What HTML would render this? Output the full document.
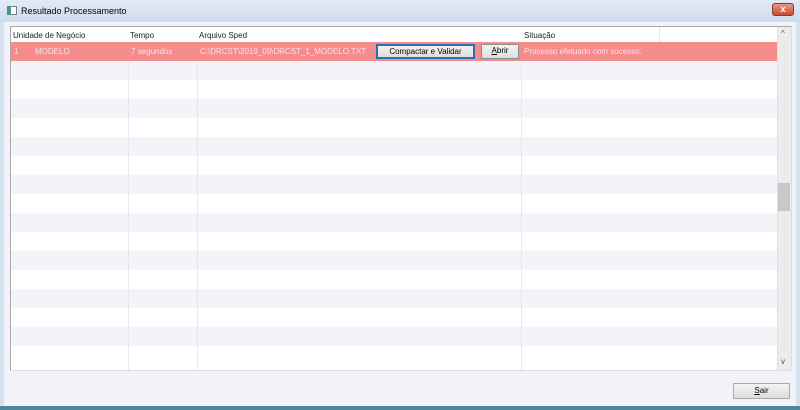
<!DOCTYPE html>
<html><head><style>
*{margin:0;padding:0;box-sizing:border-box}
body{width:800px;height:410px;overflow:hidden;background:#d3e1f1;font-family:"Liberation Sans",sans-serif;font-size:8px;color:#222;position:relative}
.a{position:absolute}
.title{left:0;top:0;width:800px;height:22px;background:linear-gradient(#e2ebf6,#cddcee)}
.client{left:4px;top:22px;width:792px;height:384px;background:#f2f2f8}
.grid{left:10px;top:26px;width:782px;height:345px;border:1px solid #a8a8a8;border-right-color:#ddd;border-bottom-color:#ddd;background:#fff;overflow:hidden}
.row{position:absolute;left:0;width:766px;height:19px}
.vl{position:absolute;top:15px;bottom:0;width:1px;background:#e6e6ec}
.t{position:absolute;white-space:nowrap}
.btn{position:absolute;border:1px solid #8e8e8e;background:linear-gradient(#f3f3f3,#dedede);text-align:center;font-size:8px;line-height:12px;color:#000}
.s{background:#f3f3fa}
</style></head><body>
<div class="a title"></div>
<div class="a" style="left:7px;top:6px;width:10px;height:9px;border:1px solid #6a7f99;background:#fff"><div style="width:3px;height:7px;background:#3a6;"></div></div>
<div class="a t" style="left:21px;top:6px;font-size:9px;color:#000">Resultado Processamento</div>
<div class="a" style="left:772px;top:3px;width:22px;height:13px;border:1px solid #8a3a30;border-radius:3px;background:linear-gradient(#e89a88,#c84a36);color:#fff;font-size:9px;text-align:center;line-height:11px;font-weight:bold">x</div>
<div class="a client"></div>
<div class="a" style="left:0;top:406px;width:800px;height:4px;background:#4a8a9a"></div>
<div class="a grid">
  <div class="t" style="left:2px;top:4px">Unidade de Negócio</div>
  <div class="t" style="left:119px;top:4px">Tempo</div>
  <div class="t" style="left:188px;top:4px">Arquivo Sped</div>
  <div class="t" style="left:513px;top:4px">Situação</div>
  <div class="row s" style="top:34px"></div>
  <div class="row s" style="top:72px"></div>
  <div class="row s" style="top:110px"></div>
  <div class="row s" style="top:148px"></div>
  <div class="row s" style="top:186px"></div>
  <div class="row s" style="top:224px"></div>
  <div class="row s" style="top:262px"></div>
  <div class="row s" style="top:300px"></div>
  <div class="vl" style="left:117px"></div>
  <div class="vl" style="left:186px"></div>
  <div class="vl" style="left:510px"></div>
  <div class="vl" style="left:648px;top:0;height:15px"></div>
  <div class="row" style="top:15px;background:#f48c8c;height:19px"></div>
  <div class="t" style="left:3px;top:20px;color:#fde">1</div>
  <div class="t" style="left:24px;top:20px;color:#fde">MODELO</div>
  <div class="t" style="left:120px;top:20px;color:#fde">7 segundos</div>
  <div class="t" style="left:189px;top:20px;color:#fde">C:\DRCST\2019_09\DRCST_1_MODELO.TXT</div>
  <div class="t" style="left:513px;top:20px;color:#fde">Processo efetuado com sucesso.</div>
  <div class="btn" style="left:365px;top:17px;width:99px;height:15px;border:2px solid #2d6fb0;line-height:11px">Compactar e Validar</div>
  <div class="btn" style="left:470px;top:17px;width:38px;height:15px;"><u>A</u>brir</div>
  <div class="a" style="left:766px;top:0;width:15px;height:343px;background:#ececec;border-left:1px solid #e0e0e0"></div>
  <div class="t" style="left:770px;top:2px;font-size:8px;color:#555">^</div>
  <div class="t" style="left:770px;top:330px;font-size:8px;color:#555">v</div>
  <div class="a" style="left:767px;top:156px;width:12px;height:28px;background:#c8c8c8"></div>
</div>
<div class="btn" style="left:733px;top:383px;width:57px;height:16px;line-height:14px;border-color:#aaa"><u>S</u>air</div>
</body></html>
